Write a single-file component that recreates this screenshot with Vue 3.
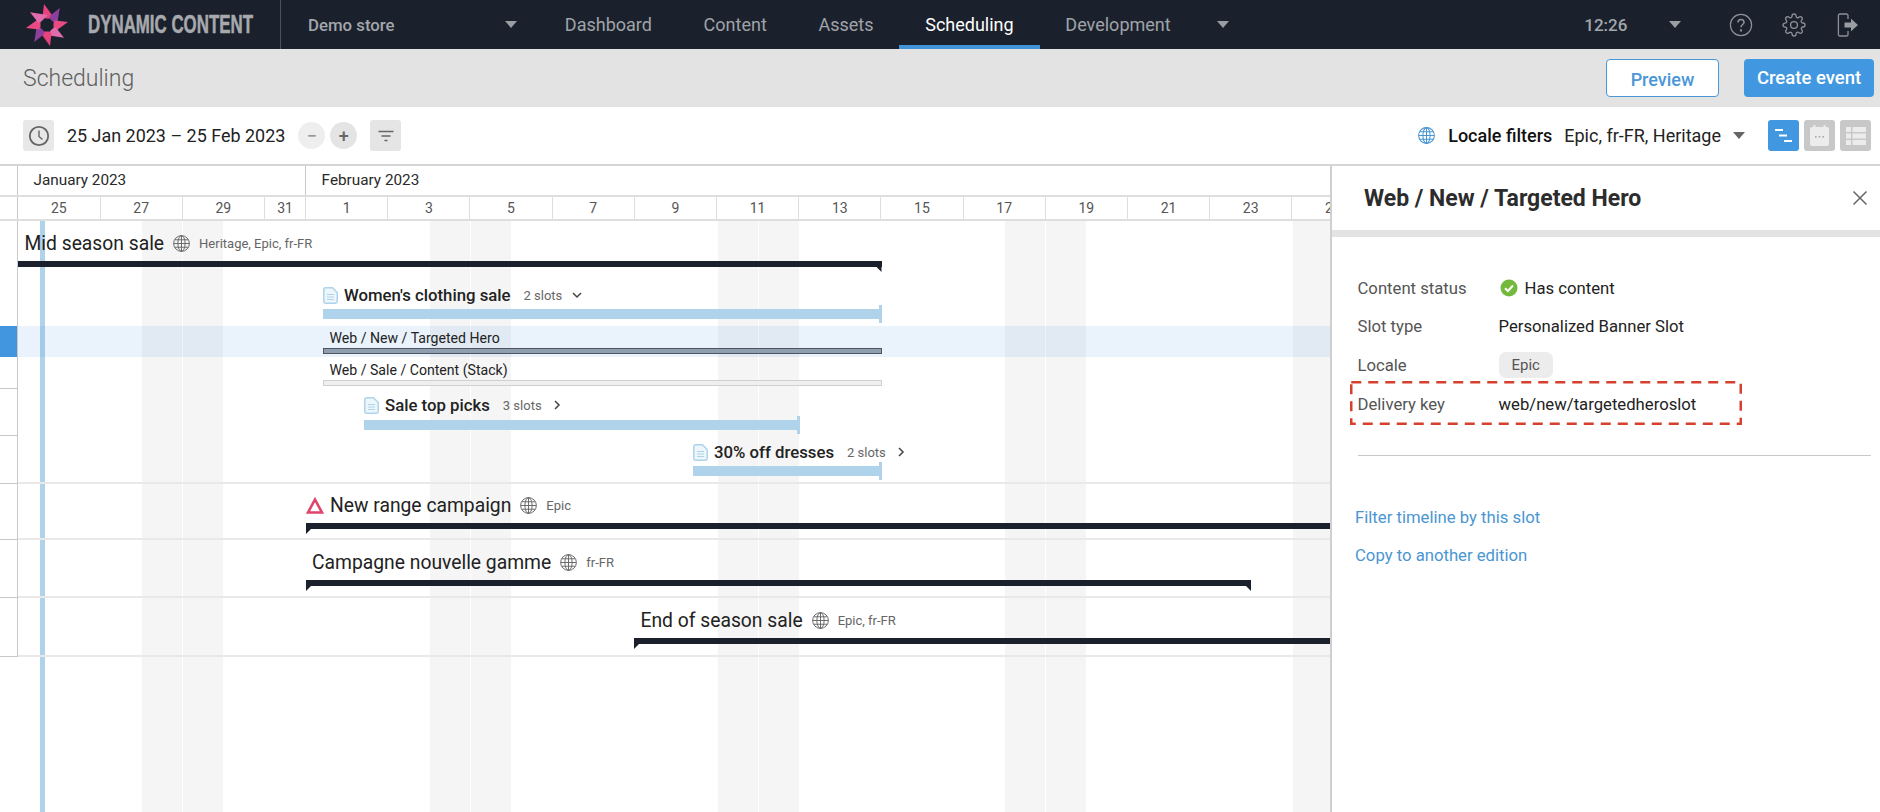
<script setup>
const DAY = 41.1
const ORIGIN = 18.4
const dayX = d => ORIGIN + DAY * d

const navItems = [
  { label: 'Dashboard' },
  { label: 'Content' },
  { label: 'Assets' },
  { label: 'Scheduling', active: true },
  { label: 'Development' }
]

const blades = [0, 1, 2, 3, 4, 5, 6, 7].map(i => ({
  angle: i * 45,
  color: ['#e8437c', '#8d3f9e', '#ea4a82', '#e06cae'][i % 4]
}))

const months = [
  { label: 'January 2023', width: dayX(7) - 18 },
  { label: 'February 2023', width: 1300 }
]
const days = [
  ['25', 2], ['27', 2], ['29', 2], ['31', 1], ['1', 2], ['3', 2], ['5', 2], ['7', 2], ['9', 2],
  ['11', 2], ['13', 2], ['15', 2], ['17', 2], ['19', 2], ['21', 2], ['23', 2], ['25', 2]
].map(([label, span], i) => ({ label, width: span * DAY + (i === 0 ? ORIGIN - 18 : 0) }))

const weekends = [3, 4, 10, 11, 17, 18, 24, 25, 31, 32].map(d => ({
  left: dayX(d) + 0.5,
  width: DAY - 1
}))

const rows = [
  { id: 'mid', kind: 'event', name: 'Mid season sale', locales: 'Heritage, Epic, fr-FR', top: 221, bottom: 284, center: 243, x: 24.5, barX: 18, barEnd: 881.5, barTop: 261, barH: 6, ticks: 'tick-r' },
  { id: 'women', kind: 'group', name: "Women's clothing sale", slots: '2 slots', open: true, top: 284, bottom: 326, center: 295, x: 323, barX: 323, barEnd: 881.5, barTop: 309, barH: 10 },
  { id: 'hero', kind: 'slot', name: 'Web / New / Targeted Hero', selected: true, top: 326, bottom: 357, center: 338, x: 329.5, barX: 323, barEnd: 881.5, barTop: 348, barH: 6, tone: 'slot-on', rail: true },
  { id: 'stack', kind: 'slot', name: 'Web / Sale / Content (Stack)', top: 357, bottom: 389, center: 370, x: 329.5, barX: 323, barEnd: 881.5, barTop: 380, barH: 6, tone: 'slot-off', rail: true },
  { id: 'picks', kind: 'group', name: 'Sale top picks', slots: '3 slots', top: 389, bottom: 436, center: 405, x: 364, barX: 364, barEnd: 799.5, barTop: 420, barH: 10, rail: true },
  { id: 'dresses', kind: 'group', name: '30% off dresses', slots: '2 slots', top: 436, bottom: 484, center: 452, x: 693, barX: 693, barEnd: 881.5, barTop: 466, barH: 10, rail: true, line: true },
  { id: 'range', kind: 'event', name: 'New range campaign', warn: true, locales: 'Epic', top: 484, bottom: 540, center: 505, x: 306, barX: 306, barEnd: 1340, barTop: 523, barH: 6, ticks: 'tick-l', rail: true, line: true },
  { id: 'gamme', kind: 'event', name: 'Campagne nouvelle gamme', locales: 'fr-FR', top: 540, bottom: 598, center: 562, x: 312, barX: 306, barEnd: 1251, barTop: 580, barH: 6, ticks: 'tick-l tick-r', rail: true, line: true },
  { id: 'end', kind: 'event', name: 'End of season sale', locales: 'Epic, fr-FR', top: 598, bottom: 657, center: 620, x: 640.5, barX: 634, barEnd: 1340, barTop: 638, barH: 6, ticks: 'tick-l', rail: true, line: true }
]

const LABEL_H = 22
const rowStyle = r => ({ height: r.bottom - r.top + 'px' })
const labelStyle = r => ({
  marginLeft: r.x - 18 + 'px',
  marginTop: r.center - LABEL_H / 2 - r.top + 'px'
})
const barStyle = r => ({
  marginLeft: r.barX - 18 + 'px',
  marginTop: r.barTop - (r.center + LABEL_H / 2) + 'px',
  width: r.barEnd - r.barX + 'px',
  height: r.barH + 'px'
})
</script>

<template>
  <div class="app">
    <header class="nav">
      <div class="brand">
        <svg class="logo" width="44" height="44" viewBox="-22 -22 44 44">
          <polygon
            v-for="b in blades"
            :key="b.angle"
            points="-3,-21 7.5,-6.5 -1.5,-6.5 -4.5,-8"
            :fill="b.color"
            :transform="`rotate(${b.angle})`"
          />
        </svg>
        <span class="brand-name"><span class="brand-text">DYNAMIC CONTENT</span></span>
      </div>
      <div class="store">
        <span>Demo store</span>
        <i class="caret"></i>
      </div>
      <nav class="tabs">
        <a v-for="t in navItems" :key="t.label" class="tab" :class="{ active: t.active }">{{ t.label }}</a>
        <i class="caret tabs-caret"></i>
      </nav>
      <div class="nav-right">
        <span class="time">12:26</span>
        <i class="caret time-caret"></i>
        <svg class="nav-icon help" width="24" height="24" viewBox="0 0 24 24" fill="none" stroke="#8d9197" stroke-width="1.2">
          <circle cx="12" cy="12" r="10.6" />
          <path d="M9 9.4a3 3 0 0 1 6 0c0 2-3 2.3-3 4.8" stroke-width="1.5" />
          <circle cx="12" cy="17.4" r=".6" fill="#8d9197" />
        </svg>
        <svg class="nav-icon gear" width="24" height="24" viewBox="0 0 24 24" fill="none" stroke="#8d9197" stroke-width="1.3">
          <circle cx="12" cy="12" r="3.4" />
          <path d="M19.4 15a1.65 1.65 0 0 0 .33 1.82l.06.06a2 2 0 0 1 0 2.83 2 2 0 0 1-2.83 0l-.06-.06a1.65 1.65 0 0 0-1.82-.33 1.65 1.65 0 0 0-1 1.51V21a2 2 0 0 1-2 2 2 2 0 0 1-2-2v-.09A1.65 1.65 0 0 0 9 19.4a1.65 1.65 0 0 0-1.82.33l-.06.06a2 2 0 0 1-2.83 0 2 2 0 0 1 0-2.83l.06-.06a1.65 1.65 0 0 0 .33-1.82 1.65 1.65 0 0 0-1.51-1H3a2 2 0 0 1-2-2 2 2 0 0 1 2-2h.09A1.65 1.65 0 0 0 4.6 9a1.65 1.65 0 0 0-.33-1.82l-.06-.06a2 2 0 0 1 0-2.83 2 2 0 0 1 2.83 0l.06.06a1.65 1.65 0 0 0 1.82.33H9a1.65 1.65 0 0 0 1-1.51V3a2 2 0 0 1 2-2 2 2 0 0 1 2 2v.09a1.65 1.65 0 0 0 1 1.51 1.65 1.65 0 0 0 1.82-.33l.06-.06a2 2 0 0 1 2.83 0 2 2 0 0 1 0 2.83l-.06.06a1.65 1.65 0 0 0-.33 1.82V9a1.65 1.65 0 0 0 1.51 1H21a2 2 0 0 1 2 2 2 2 0 0 1-2 2h-.09a1.65 1.65 0 0 0-1.51 1z" />
        </svg>
        <svg class="nav-icon logout" width="22" height="24" viewBox="0 0 22 24" fill="none">
          <path d="M11 6V2.6A1.6 1.6 0 0 0 9.4 1H3A1.6 1.6 0 0 0 1.4 2.6V21.4A1.6 1.6 0 0 0 3 23H9.4A1.6 1.6 0 0 0 11 21.4V18" stroke="#8d9197" stroke-width="1.3" />
          <path d="M7.5 9.5H14V5.8L21 12L14 18.2V14.5H7.5Z" fill="#9a9da2" />
        </svg>
      </div>
    </header>

    <section class="subbar">
      <h1 class="page-title">Scheduling</h1>
      <div class="sub-actions">
        <button class="btn btn-outline">Preview</button>
        <button class="btn btn-solid">Create event</button>
      </div>
    </section>

    <section class="toolbar">
      <div class="tool-left">
        <span class="square clock">
          <svg width="22" height="22" viewBox="0 0 22 22" fill="none" stroke="#666" stroke-width="1.8">
            <circle cx="11" cy="11" r="9.2" />
            <path d="M11 5.5V11.5L14.5 14.5" stroke-width="1.4" />
          </svg>
        </span>
        <span class="range">25 Jan 2023 – 25 Feb 2023</span>
        <span class="round minus">−</span>
        <span class="round plus">+</span>
        <span class="square filter">
          <svg width="16" height="12" viewBox="0 0 16 12" fill="none" stroke="#666" stroke-width="1.5">
            <path d="M0.5 1.5H15.5M3.5 6H12.5M6.5 10.5H9.5" />
          </svg>
        </span>
      </div>
      <div class="tool-right">
        <svg class="globe-blue" width="17" height="17" viewBox="0 0 16 16" fill="none" stroke="#4a96d2" stroke-width="1">
          <circle cx="8" cy="8" r="7.4" />
          <ellipse cx="8" cy="8" rx="3.4" ry="7.4" />
          <path d="M8 .6V15.4M.6 8H15.4M1.6 4.5H14.4M1.6 11.5H14.4" />
        </svg>
        <strong class="locale-title">Locale filters</strong>
        <span class="locale-value">Epic, fr-FR, Heritage</span>
        <i class="caret locale-caret"></i>
        <span class="view view-on">
          <svg width="17" height="13" viewBox="0 0 17 13" fill="#fff"><rect x="0" y="0" width="8" height="2" /><rect x="4" y="5.5" width="8" height="2" /><rect x="9" y="11" width="8" height="2" /></svg>
        </span>
        <span class="view">
          <svg width="19" height="21" viewBox="0 0 19 21"><rect x="0" y="2" width="19" height="19" rx="2" fill="#ececec" /><rect x="3.5" y="0" width="2" height="4" fill="#ececec" /><rect x="13.5" y="0" width="2" height="4" fill="#ececec" /><rect x="5" y="11" width="1.6" height="1.6" fill="#aaa" /><rect x="8.7" y="11" width="1.6" height="1.6" fill="#aaa" /><rect x="12.4" y="11" width="1.6" height="1.6" fill="#aaa" /></svg>
        </span>
        <span class="view">
          <svg width="20" height="18" viewBox="0 0 20 18" fill="#ececec"><rect x="0" y="0" width="5" height="5" /><rect x="6.5" y="0" width="13.5" height="5" /><rect x="0" y="6.5" width="5" height="5" /><rect x="6.5" y="6.5" width="13.5" height="5" /><rect x="0" y="13" width="5" height="5" /><rect x="6.5" y="13" width="13.5" height="5" /></svg>
        </span>
      </div>
    </section>

    <main class="main">
      <section class="timeline">
        <div class="months">
          <span class="rail-head"></span>
          <span v-for="m in months" :key="m.label" class="month" :style="{ width: m.width + 'px' }">{{ m.label }}</span>
        </div>
        <div class="days">
          <span class="rail-head"></span>
          <span v-for="(d, i) in days" :key="i" class="day" :style="{ width: d.width + 'px' }">{{ d.label }}</span>
        </div>
        <div class="canvas">
          <span v-for="w in weekends" :key="w.left" class="weekend" :style="{ left: w.left + 'px', width: w.width + 'px' }"></span>
          <span class="today"></span>
          <div
            v-for="r in rows"
            :key="r.id"
            class="row"
            :class="{ selected: r.selected, lined: r.line }"
            :style="rowStyle(r)"
          >
            <span class="rail" :class="{ 'rail-line': r.rail, 'rail-on': r.selected }"></span>
            <div class="row-body">
              <div class="label" :class="r.kind" :style="labelStyle(r)">
                <svg v-if="r.warn" class="warn" width="18" height="17" viewBox="0 0 18 17" fill="none" stroke="#e0446b" stroke-width="2.6">
                  <path d="M9 2.5L16 15.5H2Z" />
                </svg>
                <svg v-if="r.kind === 'group'" class="doc" width="15" height="17" viewBox="0 0 15 17">
                  <path d="M2.5 .8H9.5L14.2 5.5V14.5A1.7 1.7 0 0 1 12.5 16.2H2.5A1.7 1.7 0 0 1 .8 14.5V2.5A1.7 1.7 0 0 1 2.5 .8Z" fill="#edf6fb" stroke="#aed3ea" stroke-width="1.5" />
                  <path d="M4 7.5H11M4 10H11M4 12.5H11" stroke="#aed3ea" stroke-width="1" />
                </svg>
                <span class="name">{{ r.name }}</span>
                <template v-if="r.kind === 'event'">
                  <svg class="globe" width="17" height="17" viewBox="0 0 16 16" fill="none" stroke="#666" stroke-width=".9">
                    <circle cx="8" cy="8" r="7.4" />
                    <ellipse cx="8" cy="8" rx="3.4" ry="7.4" />
                    <path d="M8 .6V15.4M.6 8H15.4M1.6 4.5H14.4M1.6 11.5H14.4" />
                  </svg>
                  <span class="locales">{{ r.locales }}</span>
                </template>
                <template v-if="r.kind === 'group'">
                  <span class="slots">{{ r.slots }}</span>
                  <svg class="chev" width="10" height="10" viewBox="0 0 10 10" fill="none" stroke="#444" stroke-width="1.5">
                    <path v-if="r.open" d="M1 3L5 7L9 3" />
                    <path v-else d="M3 1L7 5L3 9" />
                  </svg>
                </template>
              </div>
              <div class="bar" :class="[`bar-${r.kind}`, r.ticks, r.tone]" :style="barStyle(r)"></div>
            </div>
          </div>
        </div>
      </section>

      <aside class="panel">
        <div class="panel-head">
          <h2 class="panel-title">Web / New / Targeted Hero</h2>
          <svg class="close" width="16" height="16" viewBox="0 0 16 16" fill="none" stroke="#666" stroke-width="1.5">
            <path d="M1.5 1.5L14.5 14.5M14.5 1.5L1.5 14.5" />
          </svg>
        </div>
        <div class="panel-body">
          <dl class="facts">
            <div class="fact">
              <dt>Content status</dt>
              <dd class="status">
                <svg width="18" height="18" viewBox="0 0 18 18">
                  <circle cx="9" cy="9" r="8.5" fill="#72b93c" />
                  <path d="M5 9.3L7.9 12L13 6.5" fill="none" stroke="#fff" stroke-width="2" />
                </svg>
                Has content
              </dd>
            </div>
            <div class="fact">
              <dt>Slot type</dt>
              <dd>Personalized Banner Slot</dd>
            </div>
            <div class="fact">
              <dt>Locale</dt>
              <dd><span class="pill">Epic</span></dd>
            </div>
            <div class="fact keyed">
              <dt>Delivery key</dt>
              <dd>web/new/targetedheroslot</dd>
              <svg class="callout" width="392" height="44" viewBox="0 0 392 44" fill="none">
                <rect x="1.25" y="1.25" width="389.5" height="41.5" stroke="#d6402e" stroke-width="2.5" stroke-dasharray="10 7" />
              </svg>
            </div>
          </dl>
          <hr class="sep" />
          <a class="link">Filter timeline by this slot</a>
          <a class="link">Copy to another edition</a>
        </div>
      </aside>
    </main>
  </div>
</template>

<style scoped>
.app {
  height: 812px;
  display: flex;
  flex-direction: column;
  overflow: hidden;
  font-family: Roboto, "Liberation Sans", sans-serif;
  color: #222;
  background: #fff;
}

.nav {
  height: 49px;
  flex: none;
  display: flex;
  align-items: center;
  background: #1a212d;
  color: #a3a6ab;
}
.brand {
  width: 281px;
  height: 49px;
  flex: none;
  display: flex;
  align-items: center;
  padding-left: 25px;
  box-sizing: border-box;
  border-right: 1px solid #4b525d;
}
.logo { flex: none; }
.brand-name { width: 164px; margin-left: 19px; overflow: visible; white-space: nowrap; }
.brand-text {
  display: inline-block;
  font-family: "Liberation Sans", sans-serif;
  font-weight: 700;
  font-size: 25px;
  color: #a7a9ad;
  -webkit-text-stroke: 0.5px #a7a9ad;
  transform: scaleX(0.675);
  transform-origin: left center;
}
.store {
  width: 258px;
  flex: none;
  display: flex;
  align-items: center;
  justify-content: space-between;
  box-sizing: border-box;
  padding: 0 22px 0 27px;
  font-size: 16.8px;
  font-weight: 500;
}
.caret {
  display: block;
  width: 0;
  height: 0;
  border-left: 6.5px solid transparent;
  border-right: 6.5px solid transparent;
  border-top: 7.5px solid #9a9da1;
  flex: none;
}
.tabs { display: flex; align-items: center; height: 49px; }
.tab {
  height: 49px;
  box-sizing: border-box;
  padding: 4px 25.85px 0;
  display: flex;
  align-items: center;
  font-size: 18px;
  color: #a0a3a8;
  border-bottom: 4px solid transparent;
}
.tab.active { color: #fff; border-bottom-color: #4393d8; }
.tabs-caret { margin-left: 20px; }
.nav-right { margin-left: auto; display: flex; align-items: center; padding-right: 21px; }
.time { font-size: 17px; font-weight: 500; color: #a3a6ab; }
.time-caret { margin-left: 41.8px; border-left-width: 6px; border-right-width: 6px; }
.help { margin-left: 48.2px; }
.gear { margin-left: 28.6px; }
.logout { margin-left: 31px; }

.subbar {
  height: 58px;
  flex: none;
  background: #e3e3e3;
  display: flex;
  align-items: center;
  justify-content: space-between;
  padding: 0 6px 0 23px;
}
.page-title { margin: 0; font-size: 23px; font-weight: 300; color: #5f5f5f; }
.sub-actions { display: flex; gap: 25px; }
.btn {
  height: 38px;
  box-sizing: border-box;
  border-radius: 4px;
  font-family: inherit;
  font-weight: 500;
  cursor: pointer;
}
.btn-outline { width: 113px; background: #fff; border: 1.5px solid #4a97d8; color: #4a96d8; padding-top: 3px; font-size: 18px; }
.btn-solid { width: 130px; background: #4298e0; border: 0; color: #fff; font-size: 18.5px; }

.toolbar {
  height: 57px;
  flex: none;
  display: flex;
  align-items: center;
  justify-content: space-between;
  padding: 0 9px 0 23px;
}
.tool-left, .tool-right { display: flex; align-items: center; }
.square {
  width: 31px;
  height: 31px;
  border-radius: 3px;
  background: #e8e8e8;
  display: flex;
  align-items: center;
  justify-content: center;
}
.range { margin-left: 13px; font-size: 17.95px; color: #222; }
.round {
  width: 27px;
  height: 27px;
  border-radius: 50%;
  display: flex;
  align-items: center;
  justify-content: center;
  font-size: 18px;
  font-weight: 500;
  color: #666;
}
.minus { margin-left: 13px; background: #eeeeee; color: #999; }
.plus { margin-left: 5px; background: #e4e4e4; }
.filter { margin-left: 13px; background: #e5e5e5; }
.globe-blue { flex: none; }
.locale-title { margin-left: 13px; font-size: 18px; font-weight: 500; color: #111; }
.locale-value { margin-left: 12px; font-size: 18px; color: #222; }
.locale-caret { margin-left: 12px; border-left-width: 6px; border-right-width: 6px; border-top-color: #666; }
.view {
  width: 31px;
  height: 31px;
  margin-left: 5px;
  border-radius: 3px;
  background: #c8c8c8;
  display: flex;
  align-items: center;
  justify-content: center;
}
.view-on { margin-left: 23px; background: #4298e0; }

.main { flex: 1; min-height: 0; display: flex; border-top: 2px solid #d5d5d5; }
.timeline { flex: 1; min-width: 0; display: flex; flex-direction: column; overflow: hidden; }
.months, .days { display: flex; flex: none; box-sizing: border-box; border-bottom: 2px solid #dedede; }
.months { height: 31px; }
.days { height: 24px; }
.rail-head { width: 18px; flex: none; box-sizing: border-box; border-right: 1px solid #c8c8c8; }
.month {
  flex: none;
  box-sizing: border-box;
  padding-left: 15.5px;
  line-height: 28px;
  font-size: 15.3px;
  color: #2a2a2a;
  border-right: 1px solid #c8c8c8;
  white-space: nowrap;
}
.day {
  flex: none;
  box-sizing: border-box;
  text-align: center;
  font-size: 14px;
  line-height: 22px;
  color: #555;
  border-right: 1px solid #dedede;
}

.canvas { flex: 1; position: relative; min-height: 0; }
.weekend { position: absolute; top: 0; bottom: 0; background: #f5f5f5; }
.today { position: absolute; top: 0; bottom: 0; left: 39.5px; width: 5px; background: #aed3ea; }
.row { position: relative; display: flex; box-sizing: border-box; }
.row.selected { background: rgba(66, 150, 224, 0.11); }
.rail {
  width: 18px;
  flex: none;
  box-sizing: border-box;
  border-right: 1px solid #c8c8c8;
  background: #fff;
}
.rail-line { border-bottom: 1px solid #c8c8c8; }
.rail-on { background: #4296e0; border-bottom: 0; }
.row-body { flex: 1; min-width: 0; box-sizing: border-box; }
.lined .row-body { border-bottom: 2px solid #e9e9e9; }
.label { height: 22px; display: flex; align-items: center; white-space: nowrap; }
.label.event .name { font-size: 19.3px; color: #222; }
.label.group .name { font-size: 16.75px; font-weight: 500; color: #222; margin-left: 6px; }
.label.slot .name { font-size: 14.1px; color: #222; }
.warn { margin-right: 6px; flex: none; }
.globe { margin-left: 9px; flex: none; }
.locales { margin-left: 9px; font-size: 13px; color: #666; }
.slots { margin-left: 13px; font-size: 13px; color: #666; }
.chev { margin-left: 10px; flex: none; }

.bar { position: relative; box-sizing: border-box; }
.bar-event { background: #1a212d; }
.bar-group { background: #aed3ea; }
.bar-group::after {
  content: "";
  position: absolute;
  right: 0;
  top: -4px;
  bottom: -4px;
  width: 3px;
  background: #aed3ea;
}
.slot-on { background: #8f9fb0; border: 1.5px solid #4f5560; }
.slot-off { background: #efefef; border: 1.5px solid #d0d0d0; }
.tick-l::before, .tick-r::after {
  content: "";
  position: absolute;
  top: 100%;
  width: 5px;
  height: 5px;
  background: #1a212d;
}
.tick-l::before { left: 0; clip-path: polygon(0 0, 100% 0, 0 100%); }
.tick-r::after { right: 0; clip-path: polygon(0 0, 100% 0, 100% 100%); }

.panel {
  width: 550px;
  flex: none;
  box-sizing: border-box;
  border-left: 2px solid #cfcfcf;
  background: #fff;
  position: relative;
}
.panel-head {
  height: 71px;
  box-sizing: border-box;
  border-bottom: 7px solid #e3e3e3;
  padding: 0 12px 0 32px;
  display: flex;
  align-items: center;
  justify-content: space-between;
}
.panel-title { margin: 0; font-size: 23px; font-weight: 700; color: #2c2c2c; }
.panel-body { padding: 32px 9px 0 25.5px; font-size: 16.7px; }
.facts { margin: 0; }
.fact { position: relative; display: flex; align-items: center; height: 38.6px; }
.fact dt { width: 141px; flex: none; color: #555; }
.fact dd { margin: 0; color: #222; display: flex; align-items: center; }
.status svg { margin-right: 7px; margin-left: 1px; }
.pill {
  height: 26px;
  padding: 0 13px;
  border-radius: 7px;
  background: #ececec;
  color: #555;
  display: flex;
  align-items: center;
  font-size: 15px;
}
.callout { position: absolute; left: -8px; top: -4px; pointer-events: none; }
.sep { margin: 32px 0 43px; border: 0; border-top: 1px solid #c8c8c8; }
.link { display: block; margin-left: -2.5px; height: 38px; line-height: 38px; color: #4a96d2; }
</style>
